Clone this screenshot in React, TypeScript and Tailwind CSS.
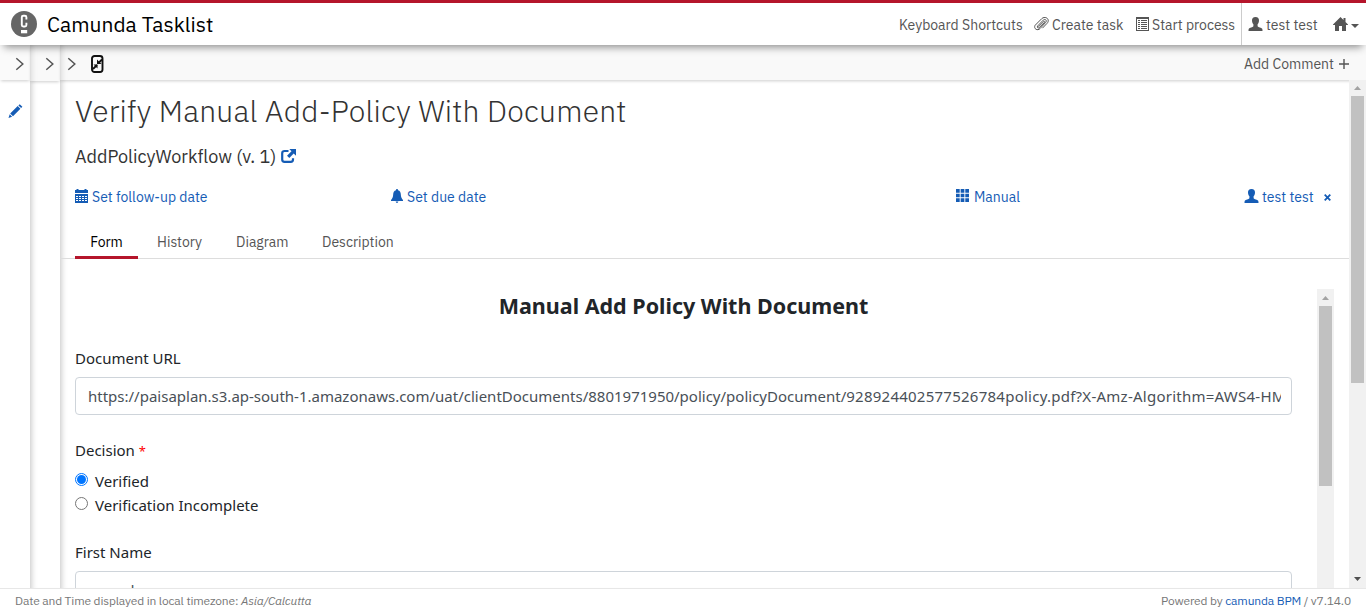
import React from "react";

const PLEX = "font-['IBM_Plex_Sans','Roboto',sans-serif]";

type IconProps = { className?: string };

const UserIcon = ({ className }: IconProps) => (
  <svg viewBox="0 0 14 14" fill="currentColor" className={className}>
    <path d="M7 0C4.600 0 3.300 1.400 3.500 3.700C3.650 5.500 4.300 6.500 4.900 7.300V9.200C4.300 10.200 1 10.700.3 11.800C0 12.300 0 13.300 0 14H14C14 13.300 14 12.300 13.700 11.800C13 10.700 9.700 10.200 9.100 9.200V7.300C9.700 6.500 10.350 5.500 10.500 3.700C10.700 1.400 9.400 0 7 0Z" />
  </svg>
);

const PaperclipIcon = ({ className }: IconProps) => (
  <svg viewBox="0 0 15 14" fill="none" stroke="currentColor" strokeWidth="1" strokeLinecap="round" className={className}>
    <path d="M4.500 9.800L9.800 4.500C10.400 3.900 11.300 4.700 10.700 5.400L5.600 10.600C4.300 11.900 2.500 10.300 3.700 8.900L9.300 3.100C11.200 1.300 13.300 3.500 11.700 5.400L6 11.600C3.600 14.200-.8 11.800 1.100 8.300L7.800 1.600C10.600-.9 14.800 1 14.200 4.300C14 5.200 13.600 5.800 13 6.400L8.700 10.900" />
  </svg>
);

const ListIcon = ({ className }: IconProps) => (
  <svg viewBox="0 0 13 14" fill="currentColor" className={className}>
    <path fillRule="evenodd" d="M0 0H13V14H0ZM1 2V13H12V2Z" />
    <path d="M2 3H4V4H2ZM5 3H11V4H5ZM2 5H4V6H2ZM5 5H11V6H5ZM2 7H4V8H2ZM5 7H11V8H5ZM2 9H4V10H2ZM5 9H11V10H5ZM2 11H4V12H2ZM5 11H11V12H5Z" />
  </svg>
);

const HomeIcon = ({ className }: IconProps) => (
  <svg viewBox="0 0 15 14" fill="currentColor" className={className}>
    <path d="M7.500 0L10.500 3V1H12.500V5L15 7.500V8H13V14H9V9H6V14H2V8H0V7.500Z" />
  </svg>
);

const CalendarIcon = ({ className }: IconProps) => (
  <svg viewBox="0 0 13 14" fill="currentColor" className={className}>
    <path d="M0 1H1.500V0H3.500V1H9.500V0H11.500V1H13V4H0Z" />
    <path fillRule="evenodd" d="M0 5H13V14H0ZM1 7V8H3V7ZM4 7V8H6V7ZM7 7V8H9V7ZM10 7V8H12V7ZM1 9V10H3V9ZM4 9V10H6V9ZM7 9V10H9V9ZM10 9V10H12V9ZM1 11V12H3V11ZM4 11V12H6V11ZM7 11V12H9V11ZM10 11V12H12V11Z" />
  </svg>
);

const BellIcon = ({ className }: IconProps) => (
  <svg viewBox="0 0 12 14" fill="currentColor" className={className}>
    <path d="M6 0C6.700 0 7 .5 7 1.200C9 1.700 9.700 3.400 9.800 5.300C9.900 8.200 10.800 9.900 12 11V12H0V11C1.200 9.900 2.100 8.200 2.200 5.300C2.300 3.400 3 1.700 5 1.200C5 .5 5.300 0 6 0ZM4.700 12.600H7.300C7.200 14.400 4.800 14.400 4.700 12.600Z" />
  </svg>
);

const GridIcon = ({ className }: IconProps) => (
  <svg viewBox="0 0 13 13" fill="currentColor" className={className}>
    <path d="M0 0H3.700V3.700H0ZM4.650 0H8.350V3.700H4.650ZM9.300 0H13V3.700H9.300ZM0 4.650H3.700V8.350H0ZM4.650 4.650H8.350V8.350H4.650ZM9.300 4.650H13V8.350H9.300ZM0 9.300H3.700V13H0ZM4.650 9.300H8.350V13H4.650ZM9.300 9.300H13V13H9.300Z" />
  </svg>
);

const ShareIcon = ({ className }: IconProps) => (
  <svg viewBox="0 0 15 14" className={className}>
    <path d="M7.500 2H3.500C2 2 1.200 2.800 1.200 4.200V10.500C1.200 12 2 12.800 3.500 12.800H9.800C11.300 12.800 12 12 12 10.500V9.200" fill="none" stroke="currentColor" strokeWidth="2.200" />
    <path d="M8.300 0H15V6.700L12.700 4.500L8.300 9L6 6.700L10.500 2.300Z" fill="currentColor" />
  </svg>
);

const PencilIcon = ({ className }: IconProps) => (
  <svg viewBox="0 0 14 14" fill="currentColor" className={className}>
    <path d="M11.200 .2L13.900 2.800L12.600 4.100L9.900 1.500ZM9.200 2.100L11.900 4.800L4.500 12.200L1.700 9.400ZM1.200 10.300L3.600 12.700L0 14Z" />
  </svg>
);

const Chevron = () => (
  <svg viewBox="0 0 9 14" className="h-[14px] w-[9px] text-[#555]" fill="none" stroke="currentColor" strokeWidth="1.500">
    <path d="M1.300 1.300L7.800 7L1.300 12.700" />
  </svg>
);

const Logo = () => (
  <svg viewBox="0 0 26 26" className="h-[26px] w-[26px] shrink-0">
    <circle cx="13" cy="13" r="13" fill="#666" />
    <path d="M15.400 8.500V6.300Q15.400 4.800 13.900 4.800H12.300Q10.800 4.800 10.800 6.300V14Q10.800 15.500 12.300 15.500H13.900Q15.400 15.500 15.400 14V11.800" fill="none" stroke="#fff" strokeWidth="1.900" />
    <path d="M10 19H16.200V22.300H10Z" fill="#fff" />
  </svg>
);

const CollapseIcon = () => (
  <svg viewBox="0 0 13 18" className="h-[18px] w-[13px]" fill="none" stroke="#111">
    <rect x="1" y="1" width="10.500" height="16" rx="2.500" strokeWidth="1.900" />
    <path d="M6 4.500V9H10.500ZM2.500 9.500H6.500V13.500Z" fill="#111" stroke="none" />
    <path d="M7 8.500L11 4.500M2 14L6 10" strokeWidth="1.800" />
  </svg>
);

function Column({ children, bar }: { children?: React.ReactNode; bar: string }) {
  return (
    <div className="flex w-[30px] shrink-0 flex-col">
      <div className={`flex shrink-0 items-center justify-end shadow-[0_2px_3px_-1px_rgba(0,0,0,0.2)] ${bar}`}>
        <Chevron />
      </div>
      {children}
    </div>
  );
}

function Scrollbar({ thumb, cap, down }: { thumb: string; cap: string; down?: boolean }) {
  return (
    <div className="flex w-[17px] shrink-0 flex-col items-center bg-[#f1f1f1]">
      <div className={`flex w-full shrink-0 items-center justify-center ${cap}`}>
        <svg viewBox="0 0 7 4" className="h-1 w-[7px]" fill="#a3a3a3"><path d="M0 4L3.500 0L7 4Z" /></svg>
      </div>
      <div className={`w-[13px] shrink-0 bg-[#c1c1c1] ${thumb}`} />
      {down && (
        <div className="mt-auto mb-px flex h-[17px] items-center">
          <svg viewBox="0 0 7 4" className="h-1 w-[7px]" fill="#505050"><path d="M0 0L3.500 4L7 0Z" /></svg>
        </div>
      )}
    </div>
  );
}

export default function App() {
  return (
    <div className={`flex h-[612px] w-[1366px] flex-col overflow-hidden bg-white text-[14px] leading-5 text-[#555] ${PLEX}`}>
      <header className="relative z-20 flex h-[45px] shrink-0 items-stretch border-t-[3px] border-[#b5152b] bg-white pl-[11px] shadow-[0_6px_8px_-4px_rgba(0,0,0,0.45)]">
        <div className="flex items-center gap-[10px] text-[21px] text-black">
          <Logo />
          <span className="whitespace-nowrap">Camunda Tasklist</span>
        </div>
        <nav className="mr-px ml-auto flex items-stretch">
          <a className="flex w-[135px] items-center pt-px">Keyboard Shortcuts</a>
          <a className="flex w-[102px] items-center gap-[3px] pt-px"><PaperclipIcon className="mb-0.5 h-[14px] w-[15px]" />Create task</a>
          <a className="flex w-[105px] items-center gap-[3px] pt-px"><ListIcon className="mb-0.5 h-[14px] w-[13px]" />Start process</a>
          <a className="flex w-[92px] items-center gap-[3px] border-l border-[#ccc] pt-px pl-[6px]"><UserIcon className="mb-0.5 h-[14px] w-[15px]" />test test</a>
          <a className="flex w-[32px] items-center gap-[3px]">
            <HomeIcon className="h-[14px] w-[15px]" />
            <svg viewBox="0 0 8 4" className="mt-[3px] h-1 w-2" fill="currentColor"><path d="M0 0H8L4 4Z" /></svg>
          </a>
        </nav>
      </header>

      <div className="flex min-h-0 flex-1 overflow-hidden">
        <Column bar="h-[35px] bg-[#fafafa] pt-[3px] pr-[6px]">
          <PencilIcon className="mt-6 ml-[7.500px] h-[14px] w-[15px] text-[#155cb5]" />
        </Column>
        <div className="flex shadow-[inset_7px_0_6px_-6px_rgba(0,0,0,0.25)]">
          <Column bar="h-[36px] bg-[#f0f0f0]/40 pt-[2px] pr-[6px]" />
        </div>
        <main className="flex min-w-0 flex-1 flex-col shadow-[inset_7px_0_6px_-6px_rgba(0,0,0,0.25)]">
          <div className="flex h-[35px] shrink-0 items-center bg-[#f0f0f0]/40 pr-[17px] pl-[7px] pt-[3px] shadow-[0_2px_3px_-1px_rgba(0,0,0,0.2)]">
            <Chevron />
            <span className="ml-[15px]"><CollapseIcon /></span>
            <a className="ml-auto flex items-center gap-[5px]">
              Add Comment
              <svg viewBox="0 0 10 10" className="h-[10px] w-[10px]" stroke="currentColor" strokeWidth="1.400"><path d="M5 0V10M0 5H10" /></svg>
            </a>
          </div>
          <div className="flex min-h-0 flex-1">
            <div className="flex min-w-0 flex-1 flex-col overflow-hidden">
              <h1 className="mt-[11px] ml-[15px] text-[30px] leading-[40px] font-light tracking-[0.21px] text-[#333]">Verify Manual Add-Policy With Document</h1>
              <h2 className="mt-[14px] ml-[15px] flex items-center gap-[5px] text-[18px] leading-6 text-[#333]">
                AddPolicyWorkflow (v. 1)
                <ShareIcon className="mb-0.5 h-[14px] w-[15px] text-[#155cb5]" />
              </h2>
              <div className="mt-[18px] ml-[15px] flex h-5 items-center text-[#155cb5]">
                <a className="flex w-[316px] items-center gap-1"><CalendarIcon className="mb-0.5 h-[14px] w-[13px]" />Set follow-up date</a>
                <a className="flex w-[565px] items-center gap-1"><BellIcon className="mb-0.5 h-[14px] w-[12px]" />Set due date</a>
                <a className="flex w-[288px] items-center gap-[5px]"><GridIcon className="mb-[3px] h-[13px] w-[13px]" />Manual</a>
                <a className="flex items-center gap-[3px]"><UserIcon className="mb-0.5 h-[14px] w-[15px]" />test test</a>
                <svg viewBox="0 0 7 7" className="ml-[10px] h-[7px] w-[7px]" stroke="currentColor" strokeWidth="1.800"><path d="M.7.7L6.300 6.300M6.300.7L.7 6.300" /></svg>
              </div>
              <div className="mt-[17px] flex h-[35px] shrink-0 border-b border-[#ddd] pl-[15px]">
                <a className="-mb-px flex w-[63px] justify-center border-b-[3px] border-[#b5152b] pt-2 text-black">Form</a>
                <a className="w-[79px] pt-2 pl-[19px]">History</a>
                <a className="w-[86px] pt-2 pl-[19px]">Diagram</a>
                <a className="pt-2 pl-[19px]">Description</a>
              </div>
              <div className="mt-[30px] mr-[15px] flex min-h-0 flex-1">
                <form className="min-w-0 flex-1 overflow-hidden pr-[25px] pl-[15px] font-['Segoe_UI','Noto_Sans',sans-serif] text-[15px] leading-6 text-[#212529]">
                  <h3 className="pt-[3px] text-center text-[21.5px] leading-[28px] font-bold">Manual Add Policy With Document</h3>
                  <label className="mt-[26px] block">Document URL</label>
                  <div className="mt-[7px] flex h-[38px] items-center rounded border border-[#ced4da] pr-[10px] pl-3 text-[#495057]">
                    <span className="block w-full overflow-hidden whitespace-nowrap">
                      https://paisaplan.s3.ap-south-1.amazonaws.com/uat/clientDocuments/8801971950/policy/policyDocument/<span className="tracking-[0.25px]">928924402577526784policy.pdf?X-Amz-Algorithm=AWS4-HMAC-SHA256</span>
                    </span>
                  </div>
                  <div className="mt-[23px] h-6">Decision <span className="text-[13px] text-[#f00]">*</span></div>
                  <label className="mt-[7px] flex h-6 items-center gap-[7px]">
                    <span className="mb-1 flex h-[13px] w-[13px] items-center justify-center rounded-full border border-[#0075ff]"><span className="h-[9px] w-[9px] rounded-full bg-[#0075ff]" /></span>
                    Verified
                  </label>
                  <label className="flex h-6 items-center gap-[7px]">
                    <span className="mb-1 h-[13px] w-[13px] rounded-full border border-[#767676]" />
                    Verification Incomplete
                  </label>
                  <label className="mt-[23px] block">First Name</label>
                  <div className="mt-[7px] h-[38px] rounded border border-[#ced4da] px-3 pt-[6px] tracking-[0.5px] text-[#495057]">anand</div>
                </form>
                <Scrollbar thumb="h-[180px]" cap="h-[17px]" />
              </div>
            </div>
            <Scrollbar thumb="h-[287px]" cap="h-[16px]" down />
          </div>
        </main>
      </div>

      <footer className="relative z-20 flex h-6 shrink-0 items-center justify-between border-t border-[#e7e7e7] bg-white px-[15px] text-[12px] tracking-[-0.16px] text-[#777]">
        <span>Date and Time displayed in local timezone: <i>Asia/Calcutta</i></span>
        <span>Powered by <a className="text-[#155cb5]">camunda BPM</a> / v7.14.0</span>
      </footer>
    </div>
  );
}
